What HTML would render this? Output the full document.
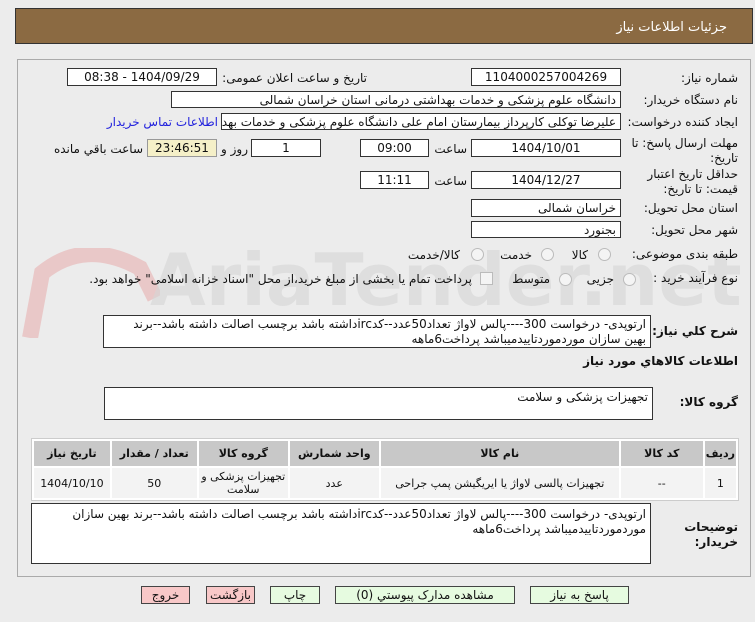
<!DOCTYPE html>
<html><head><meta charset="utf-8"><style>
body{margin:0;width:755px;height:622px;background:#ececec;font-family:"DejaVu Sans",sans-serif;font-size:12px;color:#111;position:relative;overflow:hidden}
.a{position:absolute;white-space:nowrap}
.in{position:absolute;background:#fff;border:1px solid #333;box-sizing:border-box;direction:rtl;padding:0 4px;line-height:16px;white-space:nowrap;overflow:hidden}
.c{text-align:center}
.lb{position:absolute;direction:rtl;text-align:right;white-space:nowrap}
.rd{position:absolute;width:11px;height:11px;border-radius:50%;border:1px solid #bbb;background:#f4f4f4}
.btn{position:absolute;top:586px;height:18px;border:1px solid #444;box-sizing:border-box;text-align:center;line-height:16px;font-size:12px}
table{border-collapse:separate;border-spacing:2px;position:absolute;left:31px;top:438px;width:708px;background:#fff;border:1px solid #ccc;direction:rtl}
th{background:#c8c8c8;height:23px;font-size:11px;font-weight:bold}
td{background:#f3f3f3;height:28px;text-align:center;font-size:11px}
</style></head><body>
<div class="a" style="left:15px;top:8px;width:738px;height:36px;background:#8b6a42;border:1px solid #333;box-sizing:border-box"></div>
<div class="a" style="right:28px;top:20px;color:#fff;font-size:13px">جزئیات اطلاعات نیاز</div>
<div class="a" style="left:17px;top:59px;width:734px;height:518px;border:1px solid #aaa;box-sizing:border-box"></div>
<svg class="a" style="left:20px;top:248px" width="140" height="90"><path d="M10 90 L22 25 Q65 -10 120 20 L135 50" fill="none" stroke="#e8b0b0" stroke-width="16" opacity=".6"/></svg>
<div class="a" style="left:150px;top:238px;font-size:72px;font-weight:bold;color:#d6d6d6;opacity:.6">AriaTender.net</div>

<div class="lb" style="right:17px;top:71px">شماره نیاز:</div>
<div class="in c" style="left:471px;top:68px;width:150px;height:18px">1104000257004269</div>
<div class="lb" style="right:388px;top:71px">تاریخ و ساعت اعلان عمومی:</div>
<div class="in c" style="left:67px;top:68px;width:150px;height:18px">1404/09/29 - 08:38</div>

<div class="lb" style="right:17px;top:93px">نام دستگاه خریدار:</div>
<div class="in" style="left:171px;top:91px;width:450px;height:17px">دانشگاه علوم پزشکی و خدمات بهداشتی درمانی استان خراسان شمالی</div>

<div class="lb" style="right:17px;top:115px">ایجاد کننده درخواست:</div>
<div class="in" style="left:221px;top:113px;width:400px;height:17px">علیرضا توکلی کارپرداز بیمارستان امام علی دانشگاه علوم پزشکی و خدمات بهدا</div>
<div class="lb" style="right:537px;top:115px;color:#2222dd">اطلاعات تماس خریدار</div>

<div class="lb" style="right:17px;top:136px;line-height:15px">مهلت ارسال پاسخ: تا<br>تاریخ:</div>
<div class="in c" style="left:471px;top:139px;width:150px;height:18px">1404/10/01</div>
<div class="lb" style="right:288px;top:142px">ساعت</div>
<div class="in c" style="left:360px;top:139px;width:69px;height:18px">09:00</div>
<div class="in c" style="left:251px;top:139px;width:70px;height:18px">1</div>
<div class="lb" style="right:507px;top:142px">روز و</div>
<div class="in c" style="left:147px;top:139px;width:70px;height:18px;background:#f5f0c8;border-color:#999">23:46:51</div>
<div class="lb" style="right:612px;top:142px">ساعت باقي مانده</div>

<div class="lb" style="right:17px;top:167px;line-height:15px">حداقل تاریخ اعتبار<br>قیمت: تا تاریخ:</div>
<div class="in c" style="left:471px;top:171px;width:150px;height:18px">1404/12/27</div>
<div class="lb" style="right:288px;top:174px">ساعت</div>
<div class="in c" style="left:360px;top:171px;width:69px;height:18px">11:11</div>

<div class="lb" style="right:17px;top:201px">استان محل تحویل:</div>
<div class="in" style="left:471px;top:199px;width:150px;height:18px">خراسان شمالی</div>
<div class="lb" style="right:17px;top:223px">شهر محل تحویل:</div>
<div class="in" style="left:471px;top:221px;width:150px;height:17px">بجنورد</div>

<div class="lb" style="right:17px;top:247px">طبقه بندی موضوعی:</div>
<div class="rd" style="left:598px;top:248px"></div><div class="lb" style="right:167px;top:248px">کالا</div>
<div class="rd" style="left:541px;top:248px"></div><div class="lb" style="right:223px;top:248px">خدمت</div>
<div class="rd" style="left:471px;top:248px"></div><div class="lb" style="right:295px;top:248px">کالا/خدمت</div>

<div class="lb" style="right:17px;top:271px">نوع فرآیند خرید :</div>
<div class="rd" style="left:623px;top:273px"></div><div class="lb" style="right:141px;top:272px">جزیی</div>
<div class="rd" style="left:559px;top:273px"></div><div class="lb" style="right:205px;top:272px">متوسط</div>
<div class="a" style="left:480px;top:272px;width:11px;height:11px;border:1px solid #bbb;background:#f4f4f4"></div>
<div class="lb" style="right:283px;top:272px">پرداخت تمام یا بخشی از مبلغ خرید،از محل "اسناد خزانه اسلامی" خواهد بود.</div>

<div class="lb" style="right:17px;top:324px;font-weight:bold">شرح کلي نیاز:</div>
<div class="in" style="left:103px;top:315px;width:548px;height:33px;line-height:15px;white-space:normal;padding-top:1px">ارتوپدی- درخواست 300----پالس لاواژ تعداد50عدد--کدircداشته باشد برچسب اصالت داشته باشد--برند بهین سازان موردموردتاییدمیباشد پرداخت6ماهه</div>
<div class="lb" style="right:17px;top:354px;font-weight:bold">اطلاعات کالاهاي مورد نیاز</div>
<div class="lb" style="right:17px;top:395px;font-weight:bold">گروه کالا:</div>
<div class="in" style="left:104px;top:387px;width:549px;height:33px;line-height:18px">تجهیزات پزشکی و سلامت</div>

<table><tr><th style="width:25px">ردیف</th><th style="width:80px">کد کالا</th><th style="width:236px">نام کالا</th><th style="width:87px">واحد شمارش</th><th style="width:87px">گروه کالا</th><th style="width:83px">تعداد / مقدار</th><th>تاریخ نیاز</th></tr>
<tr><td>1</td><td>--</td><td>تجهیزات پالسی لاواژ یا ایریگیشن پمپ جراحی</td><td>عدد</td><td style="line-height:13px">تجهیزات پزشکی و سلامت</td><td>50</td><td>1404/10/10</td></tr></table>

<div class="lb" style="right:17px;top:520px;font-weight:bold;line-height:15px">توضیحات<br>خریدار:</div>
<div class="in" style="left:31px;top:503px;width:620px;height:61px;line-height:15px;white-space:normal;padding-top:3px">ارتوپدی- درخواست 300----پالس لاواژ تعداد50عدد--کدircداشته باشد برچسب اصالت داشته باشد--برند بهین سازان موردموردتاییدمیباشد پرداخت6ماهه</div>

<div class="btn" style="left:141px;width:49px;background:#f8c8c8">خروج</div>
<div class="btn" style="left:206px;width:49px;background:#f8c8c8">بازگشت</div>
<div class="btn" style="left:270px;width:50px;background:#e6fbe0">چاپ</div>
<div class="btn" style="left:335px;width:180px;background:#e6fbe0">مشاهده مدارک پیوستي (0)</div>
<div class="btn" style="left:530px;width:99px;background:#e6fbe0">پاسخ به نیاز</div>
</body></html>
